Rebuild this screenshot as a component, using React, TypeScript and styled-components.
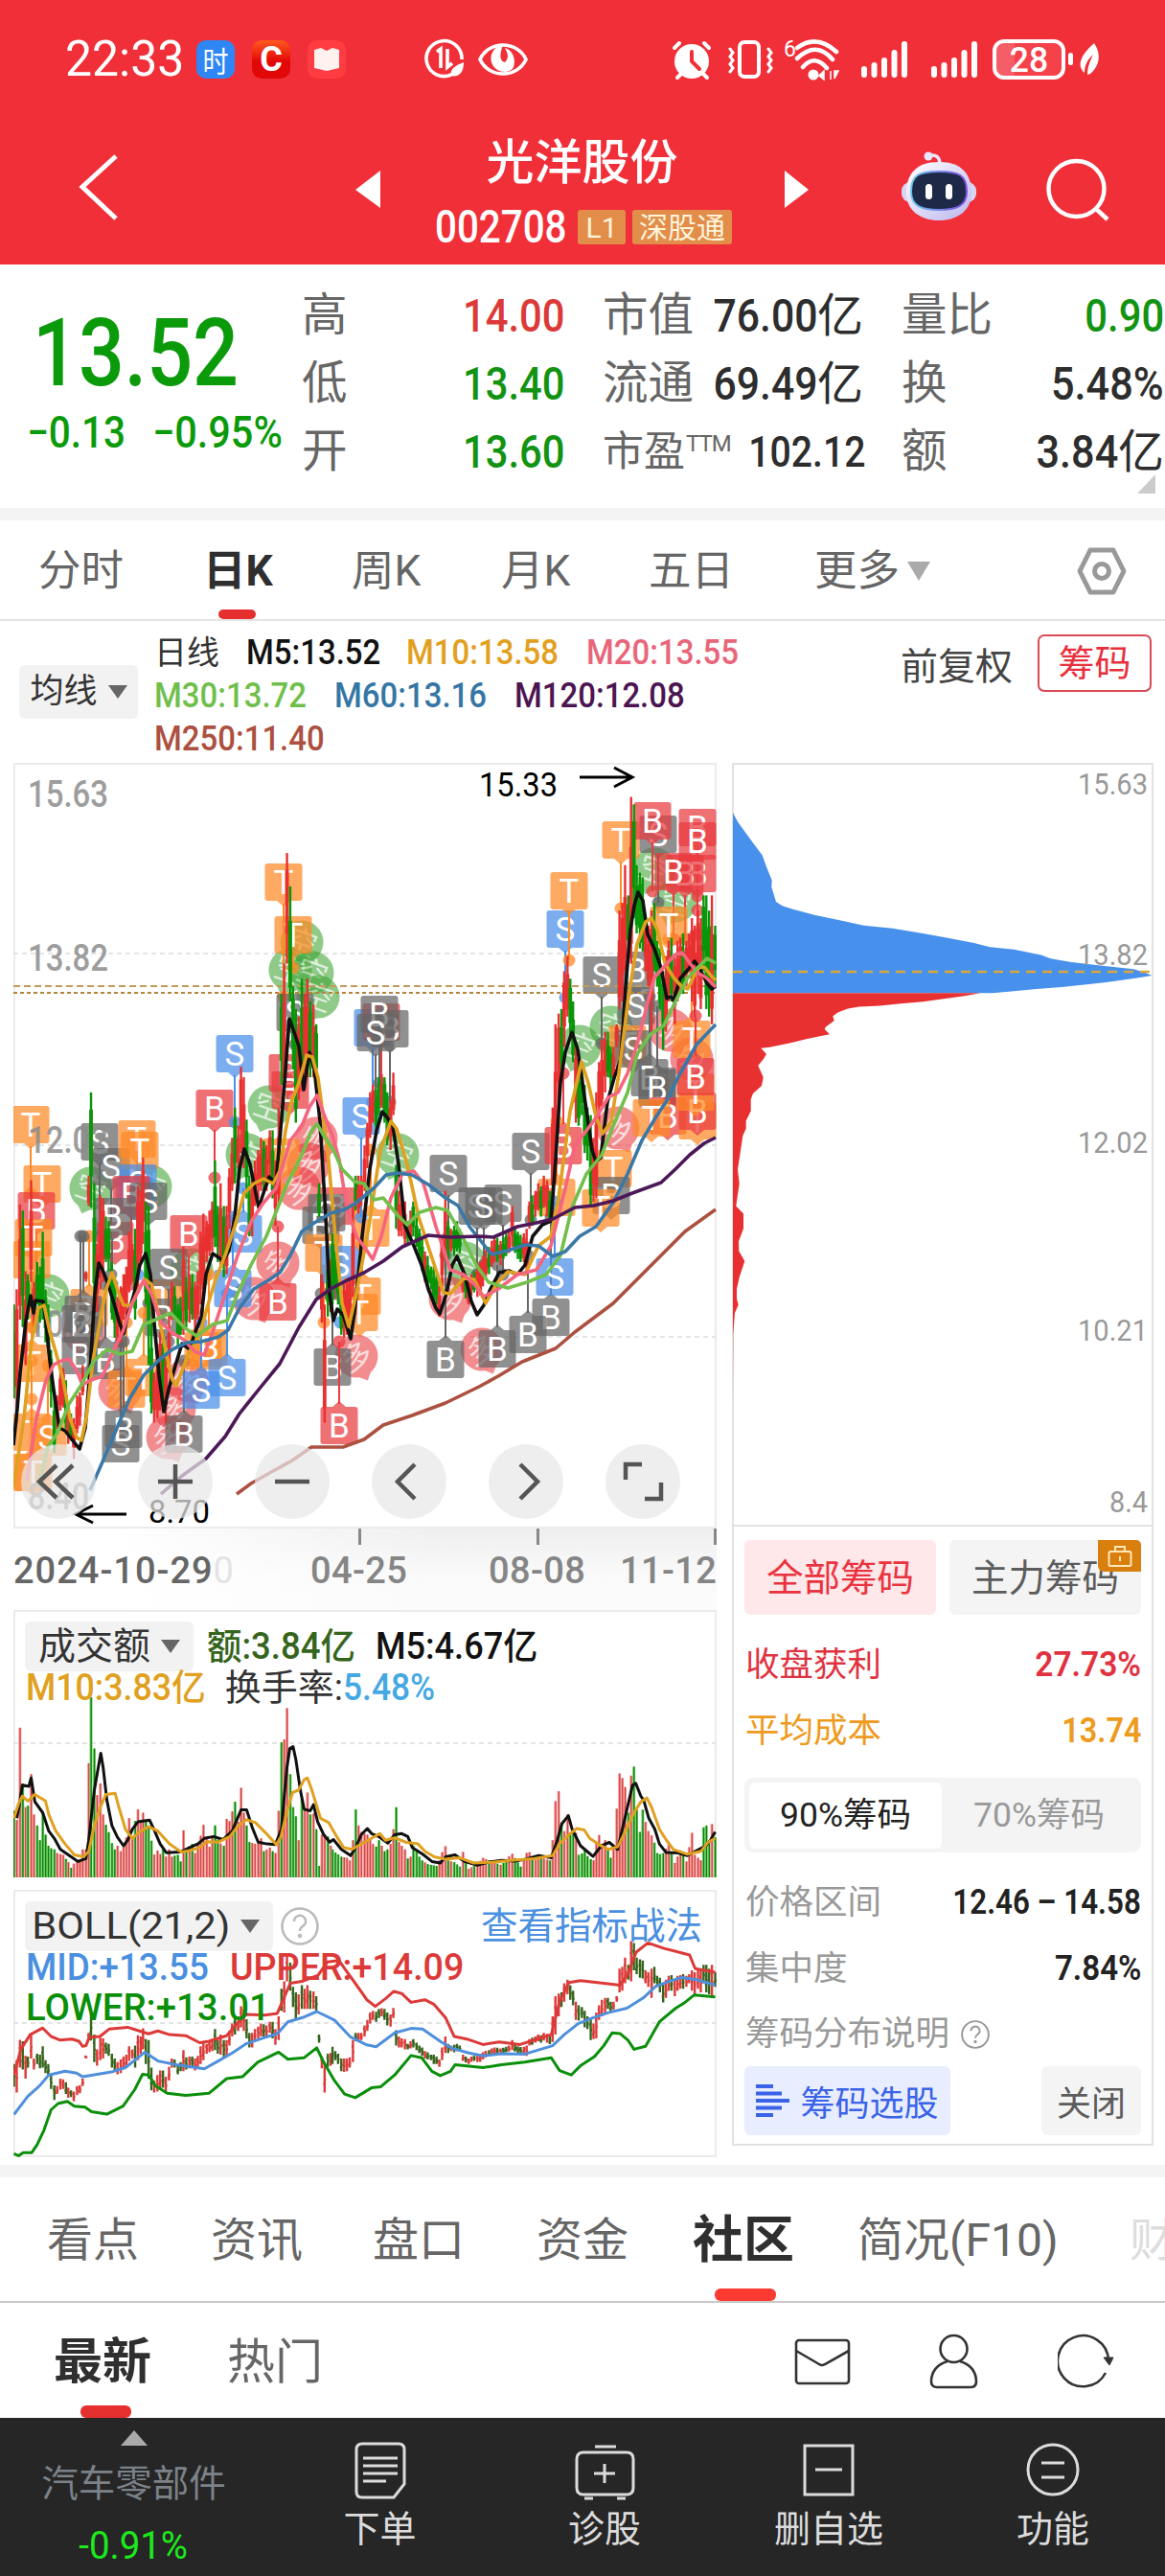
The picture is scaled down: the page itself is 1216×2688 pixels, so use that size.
// Imports
import {FC, ReactNode} from "react";
import styled, {createGlobalStyle} from "styled-components";

const GlobalStyle = createGlobalStyle`
	* { box-sizing: border-box; }
	body {
		margin: 0;
		background: #fff;
		color: #333;
		font-family: Roboto, "Noto Sans CJK SC", sans-serif;
		-webkit-font-smoothing: antialiased;
	}
	svg { display: block; flex: none; }
`;

// Chart data
type Point = [number, number];

const parse = (data: string, map: (x: number, y: number) => Point): Point[] => {
	const n = data.trim().split(/\s+/).map(Number);
	const out: Point[] = [];
	for (let i = 0; i < n.length; i += 2) out.push(map(n[i], n[i + 1]));
	return out;
};
const join = (points: Point[]) =>
	points.map(([x, y]) => `${x.toFixed(1)},${y.toFixed(1)}`).join(" ");

// The lower panels and the candles share one scale
const px = (x: number) => x / 2.063;
const low = (x: number, y: number): Point => [px(x), 1660 + y / 2.613];
const same = (x: number, y: number): Point => [x, y];
const candleY = (y: number) => 830 + (y - 954) * 1.581;

// x, high, low, direction
const candles = `30 1290 1352 g;36 1280 1368 r;43 1224 1300 r;49 1228 1305 g;55 1268 1330 r;60 1270 1300 g;67 1208 1275 r;73 1275 1305 r;80 1262 1290 g;86 1265 1302 g;92 1242 1300 g;98 1280 1315 g;104 1290 1322 g;110 1320 1358 g;117 1348 1388 g;123 1350 1372 r;130 1330 1360 r;136 1332 1358 r;142 1340 1372 g;147 1355 1382 r;153 1362 1380 g;159 1365 1392 r;166 1350 1375 r;172 1348 1370 r;178 1330 1350 r;185 1268 1275 r;191 1205 1225 r;196 1150 1226 g;203 1210 1285 g;209 1250 1295 r;216 1218 1280 r;222 1220 1275 r;228 1232 1262 g;234 1235 1268 g;241 1262 1300 g;247 1275 1312 g;253 1285 1318 r;260 1278 1315 r;266 1270 1300 r;272 1265 1300 r;278 1242 1282 r;285 1250 1275 r;291 1240 1300 g;297 1212 1280 r;303 1215 1262 r;308 1193 1250 r;314 1222 1290 g;320 1225 1330 g;326 1300 1362 g;332 1335 1368 r;339 1320 1365 r;345 1308 1360 r;351 1308 1355 g;357 1325 1368 r;364 1298 1335 r;370 1275 1300 r;376 1278 1300 g;383 1290 1318 g;389 1285 1310 g;395 1252 1310 r;401 1272 1305 g;408 1270 1302 r;414 1270 1300 g;420 1275 1308 r;426 1268 1300 r;432 1242 1290 r;438 1230 1280 r;445 1235 1262 r;451 1228 1258 r;457 1222 1255 r;463 1195 1252 g;469 1225 1262 g;475 1210 1265 r;482 1225 1272 g;488 1225 1270 r;494 1200 1240 r;500 1180 1215 r;506 1160 1210 g;513 1172 1200 r;519 1133 1190 r;525 1140 1200 r;531 1168 1220 g;537 1205 1245 g;543 1205 1245 r;549 1195 1225 r;556 1188 1220 r;562 1180 1215 r;568 1182 1215 g;574 1185 1215 r;581 1175 1205 r;587 1175 1220 g;593 1195 1238 r;600 1160 1225 r;606 1085 1145 g;612 1065 1150 r;618 992 1065 r;625 1014 1090 g;631 1080 1135 g;637 1095 1170 g;643 1100 1155 r;650 1075 1140 g;656 1085 1140 r;662 1075 1140 r;668 1090 1140 g;675 1092 1140 r;681 1105 1145 g;687 1210 1232 g;693 1270 1302 r;699 1290 1368 r;706 1262 1298 g;712 1260 1295 r;716 1243 1290 g;722 1255 1280 g;728 1262 1290 g;735 1275 1310 g;741 1275 1312 r;747 1275 1310 r;753 1272 1300 r;760 1225 1285 r;766 1205 1228 g;772 1205 1230 r;778 1205 1225 r;785 1185 1215 r;791 1170 1200 r;797 1150 1180 r;803 1145 1170 r;810 1148 1175 g;816 1140 1165 g;822 1138 1160 r;828 1140 1170 g;834 1150 1185 g;841 1155 1188 r;847 1137 1165 r;853 1198 1240 g;859 1215 1245 r;865 1220 1245 r;872 1222 1250 r;878 1235 1250 g;884 1228 1248 r;890 1222 1245 g;897 1232 1252 g;903 1240 1260 g;909 1245 1268 g;915 1255 1275 r;921 1258 1278 g;928 1265 1280 g;934 1265 1290 g;940 1270 1290 g;946 1278 1298 r;952 1245 1280 r;959 1215 1260 r;965 1235 1260 g;971 1240 1255 r;978 1238 1258 g;984 1235 1255 g;990 1240 1256 g;997 1265 1282 r;1003 1270 1286 g;1009 1275 1290 r;1015 1270 1284 r;1021 1268 1282 g;1028 1265 1285 r;1034 1262 1284 r;1040 1258 1278 r;1046 1254 1272 r;1053 1252 1270 g;1059 1248 1265 r;1065 1245 1262 r;1071 1246 1262 g;1078 1248 1264 r;1084 1246 1260 g;1090 1243 1258 g;1096 1240 1256 r;1103 1225 1252 r;1109 1238 1256 g;1115 1242 1260 g;1121 1244 1262 g;1128 1243 1262 r;1134 1240 1268 r;1140 1222 1240 r;1146 1218 1238 g;1153 1215 1232 r;1159 1210 1228 r;1165 1212 1232 g;1171 1205 1226 r;1178 1208 1232 r;1184 1215 1236 g;1190 1160 1230 r;1196 1105 1210 r;1203 1098 1160 r;1209 1095 1135 g;1215 1070 1120 r;1222 1060 1100 r;1228 1075 1115 g;1234 1090 1130 g;1240 1120 1170 r;1246 1130 1172 g;1253 1135 1165 g;1259 1145 1190 g;1265 1160 1195 g;1272 1165 1225 g;1278 1180 1222 r;1284 1150 1220 r;1290 1130 1170 r;1296 1115 1160 r;1303 1110 1150 r;1309 1110 1140 g;1315 1120 1148 g;1321 1120 1142 r;1328 1105 1120 r;1334 1030 1095 r;1340 1025 1090 r;1346 1000 1070 r;1353 1020 1060 g;1359 955 1065 r;1365 960 1035 g;1371 1000 1045 g;1378 1005 1055 g;1384 1008 1057 g;1390 1035 1070 r;1396 1040 1080 r;1403 1030 1110 r;1409 1025 1070 g;1415 1050 1080 g;1421 1055 1095 g;1428 1070 1122 g;1434 1060 1110 r;1440 1050 1090 r;1446 1048 1090 g;1453 1060 1105 r;1459 1050 1090 r;1465 1048 1085 r;1471 1045 1085 g;1478 1050 1080 r;1484 1045 1070 r;1490 1035 1090 r;1496 1040 1100 r;1503 1030 1085 r;1509 1035 1095 r;1515 1020 1070 g;1521 1020 1095 g;1527 1030 1100 g;1533 1020 1105 r;1540 1040 1080 g`
	.split(";")
	.map((row) => {
		const [x, hi, lo, dir] = row.trim().split(" ");
		return {x: Number(x), hi: Number(hi), lo: Number(lo), up: dir === "r"};
	});

const averages: {color: string; data: string}[] = [
	{
		color: "#111",
		data: "14 1508 18 1470 21 1433 27 1378 32 1352 35 1370 37 1357 45 1358 48 1380 52 1420 56 1450 62 1490 68 1493 75 1502 83 1512 89 1490 94 1430 99 1350 103 1318 107 1325 112 1338 119 1360 124 1378 129 1392 134 1370 140 1350 146 1320 152 1308 157 1330 160 1370 166 1435 171 1473 176 1450 183 1425 190 1402 198 1408 203 1392 210 1375 215 1330 222 1308 228 1312 233 1316 239 1305 245 1270 250 1220 255 1199 261 1215 266 1240 270 1260 275 1245 281 1228 288 1235 292 1190 297 1130 302 1063 308 1080 312 1092 317 1137 323 1098 328 1115 334 1170 340 1270 344 1350 348 1378 352 1366 358 1372 363 1387 366 1397 370 1370 378 1290 386 1220 393 1180 399 1160 404 1166 410 1175 416 1215 423 1280 432 1300 440 1320 447 1345 455 1365 459 1371 466 1350 472 1320 477 1311 485 1330 492 1358 498 1372 505 1362 512 1345 521 1328 531 1326 540 1330 548 1320 556 1290 566 1278 575 1274 580 1210 585 1130 590 1098 597 1077 603 1095 608 1130 613 1165 618 1200 622 1212 627 1208 634 1150 641 1125 648 1105 653 1030 658 970 662 945 666 931 671 940 676 975 683 990 690 1010 696 1042 700 1040 703 1044 710 1021 718 1012 725 1003 730 1010 738 1026 743 1032 747 1029",
	},
	{
		color: "#e0a020",
		data: "14 1552 25 1480 33 1400 40 1365 46 1362 52 1390 58 1410 66 1440 73 1480 80 1500 85 1503 90 1480 97 1420 104 1380 111 1345 117 1328 124 1350 129 1362 137 1362 145 1345 151 1335 158 1340 165 1370 172 1405 180 1440 184 1446 190 1430 198 1410 208 1395 216 1365 225 1335 235 1310 245 1280 255 1245 265 1235 275 1230 285 1235 292 1222 298 1180 304 1150 312 1130 320 1101 326 1103 332 1125 342 1200 350 1290 357 1360 364 1384 372 1350 385 1280 397 1200 408 1170 414 1178 425 1215 437 1270 450 1310 463 1349 470 1350 484 1334 495 1335 507 1360 518 1340 530 1327 548 1330 562 1300 575 1290 583 1250 595 1160 607 1108 614 1130 622 1165 629 1183 638 1170 646 1120 656 1040 665 985 674 962 680 958 686 970 694 1005 703 1020 712 1030 718 1032 726 1015 731 1008 736 1010 742 1018 747 1023",
	},
	{
		color: "#f5657e",
		data: "28 1545 38 1480 48 1440 56 1424 64 1420 72 1418 80 1430 86 1445 95 1440 107 1436 118 1410 128 1390 138 1360 150 1336 158 1350 168 1380 180 1391 192 1398 203 1410 213 1414 222 1390 235 1350 248 1310 262 1275 275 1255 288 1240 303 1190 315 1175 323 1155 331 1143 337 1160 347 1185 354 1210 362 1260 372 1290 383 1305 389 1314 398 1290 408 1250 420 1225 432 1222 442 1235 455 1280 470 1325 484 1330 495 1340 505 1353 520 1345 540 1330 560 1325 575 1300 590 1240 600 1195 612 1180 623 1165 635 1145 645 1140 655 1120 665 1090 675 1050 683 1020 692 1010 705 996 712 994 720 1005 728 1015 737 1020 747 1030",
	},
	{
		color: "#72bf4b",
		data: "40 1550 50 1510 60 1495 72 1465 85 1445 98 1420 112 1408 125 1413 138 1410 150 1382 165 1376 178 1370 192 1385 205 1394 222 1382 237 1378 248 1350 262 1320 278 1290 290 1260 300 1235 315 1205 325 1180 331 1173 338 1185 348 1200 357 1220 370 1233 380 1235 390 1252 400 1250 415 1268 425 1278 438 1265 455 1260 467 1263 480 1285 497 1320 510 1338 530 1344 550 1338 570 1330 585 1310 597 1260 612 1225 628 1205 642 1170 655 1140 665 1100 678 1080 693 1070 705 1045 718 1020 730 1008 738 1000 747 1005",
	},
	{
		color: "#3a78a8",
		data: "94 1555 105 1530 120 1495 135 1460 150 1435 165 1420 180 1408 195 1401 210 1400 228 1395 238 1388 250 1365 265 1345 280 1336 292 1328 303 1310 315 1285 328 1276 345 1266 360 1262 372 1255 390 1240 403 1226 415 1224 430 1226 447 1236 465 1250 478 1258 490 1280 513 1309 530 1305 548 1299 562 1300 577 1311 590 1306 605 1290 622 1280 640 1255 655 1225 670 1190 685 1165 695 1150 710 1120 727 1090 747 1069",
	},
	{
		color: "#4c1858",
		data: "168 1559 190 1540 215 1522 235 1499 250 1475 270 1450 292 1423 312 1385 330 1356 345 1345 362 1336 380 1328 400 1316 420 1301 447 1289 470 1291 500 1290 515 1291 540 1280 560 1276 577 1272 600 1260 620 1258 640 1253 660 1245 690 1234 705 1220 720 1205 735 1193 747 1187",
	},
	{
		color: "#ac5040",
		data: "247 1559 262 1548 285 1535 305 1524 325 1510 358 1510 380 1502 400 1487 430 1477 465 1464 500 1447 520 1436 545 1421 580 1407 600 1390 640 1360 680 1320 715 1285 747 1262",
	},
];

const volumeTops = parse(
	"30 600 36 625 42 345 48 515 55 590 61 585 67 500 73 610 80 640 86 680 92 605 98 665 105 700 117 705 123 715 136 720 147 740 153 755 160 742 172 738 178 705 184 745 191 470 196 290 203 430 209 557 216 525 222 610 228 638 234 658 240 685 247 705 253 695 260 710 270 690 278 620 284 680 296 590 303 630 308 605 315 630 322 655 327 688 333 725 339 708 345 718 351 705 358 728 364 705 370 725 376 722 383 720 389 738 395 653 401 705 414 690 420 715 426 690 432 668 438 638 451 698 463 640 470 685 482 695 488 622 494 628 506 575 513 630 519 537 525 605 531 640 537 685 550 690 562 675 568 710 581 700 587 710 593 715 600 600 606 413 612 405 618 320 625 500 631 590 637 615 643 680 649 560 655 605 662 550 668 610 674 600 681 650 687 750 693 665 700 665 706 670 712 695 718 710 724 715 735 725 747 728 753 735 760 680 766 596 772 640 779 660 791 665 803 690 809 700 816 680 828 710 834 705 841 690 847 650 853 590 859 685 865 695 872 705 878 730 884 725 890 695 903 725 909 735 920 745 940 750 946 735 958 690 965 735 978 740 990 752 997 712 1009 758 1028 745 1040 728 1053 735 1080 748 1102 715 1121 752 1137 706 1150 735 1165 728 1184 735 1190 680 1200 503 1206 590 1212 675 1222 610 1228 660 1240 660 1247 730 1260 700 1266 728 1278 735 1284 690 1292 658 1298 710 1303 680 1315 728 1322 690 1334 498 1342 515 1347 540 1353 605 1360 487 1366 478 1372 620 1380 670 1386 560 1392 665 1398 650 1410 690 1416 720 1428 715 1441 690 1453 742 1466 705 1478 738 1490 660 1496 720 1509 735 1515 645 1521 640 1527 690 1534 627 1541 680",
	same
);
const volumeAt = (x: number) => {
	const i = Math.max(1, volumeTops.findIndex(([vx]) => vx >= x));
	const [x0, y0] = volumeTops[i - 1];
	const [x1, y1] = volumeTops[i];
	return y0 + ((y1 - y0) * (x - x0)) / (x1 - x0);
};
const volumeM5 =
	"36 620 42 580 48 530 62 533 67 510 75 575 92 605 105 655 117 675 130 705 153 725 168 738 185 730 191 680 203 545 209 500 217 443 222 480 230 570 241 640 253 672 266 695 275 680 285 650 297 630 322 625 333 655 345 690 358 714 389 712 408 700 426 690 440 675 460 670 480 678 500 655 510 625 519 597 531 597 543 645 556 685 575 690 593 692 606 650 612 560 618 480 624 430 631 425 637 460 647 545 655 595 668 600 675 583 684 630 697 665 710 685 718 678 735 705 755 722 766 700 778 665 791 648 800 662 815 670 835 688 850 665 865 662 878 670 888 700 910 718 930 738 948 742 960 725 980 720 1000 738 1028 748 1050 740 1080 735 1110 737 1130 732 1160 722 1187 728 1200 680 1210 635 1224 613 1232 650 1250 695 1277 724 1295 695 1312 686 1330 705 1340 650 1353 580 1362 530 1369 525 1380 560 1386 570 1397 620 1410 650 1420 690 1434 713 1460 715 1480 722 1500 708 1520 695 1530 680 1540 657";
const volumeM10 =
	"30 620 40 580 48 560 60 573 75 555 98 573 105 610 120 655 140 690 160 720 180 725 191 710 203 640 216 590 228 555 248 552 256 590 270 650 285 675 300 658 320 643 340 655 365 690 390 712 410 708 430 700 445 684 470 685 495 670 510 645 530 624 550 632 572 660 595 692 605 670 618 600 630 550 643 543 655 515 662 510 672 545 690 620 708 632 725 670 740 700 758 705 778 690 800 675 818 662 830 680 850 673 875 686 900 690 915 710 935 725 960 732 990 728 1020 742 1060 740 1100 735 1150 730 1190 722 1205 690 1225 665 1242 648 1258 652 1270 675 1290 692 1310 705 1330 698 1345 660 1365 605 1380 575 1393 565 1403 590 1420 650 1435 680 1450 705 1480 718 1510 710 1525 685 1540 675";

const bands: {color: string; data: string}[] = [
	{
		color: "#dc3a38",
		data: "30 1320 45 1250 65 1210 92 1192 110 1215 130 1225 155 1222 170 1228 178 1242 185 1240 192 1218 215 1215 235 1195 275 1190 300 1200 320 1208 340 1200 365 1210 400 1213 430 1232 450 1228 488 1213 510 1180 530 1155 570 1157 597 1152 608 1120 625 1070 650 1065 685 1048 705 1012 730 1008 742 1030 765 1070 790 1115 808 1133 830 1112 848 1092 865 1098 885 1122 915 1115 935 1128 960 1165 978 1215 1005 1222 1040 1237 1075 1230 1120 1237 1150 1225 1187 1210 1205 1120 1225 1068 1250 1063 1300 1070 1335 1075 1350 1050 1370 985 1395 960 1430 975 1485 993 1497 1030 1540 1040",
	},
	{
		color: "#4f8fdc",
		data: "30 1428 60 1378 85 1350 105 1320 140 1310 165 1315 178 1325 200 1320 240 1312 270 1300 312 1258 340 1282 380 1292 440 1303 470 1282 500 1260 530 1235 570 1218 597 1208 620 1175 655 1162 682 1147 720 1170 755 1217 790 1238 810 1243 850 1205 885 1193 910 1195 950 1230 975 1248 1010 1260 1040 1268 1080 1262 1130 1263 1190 1240 1215 1210 1245 1180 1275 1165 1310 1150 1350 1138 1385 1110 1412 1078 1440 1065 1468 1054 1500 1060 1540 1075",
	},
	{
		color: "#0a8f0a",
		data: "30 1535 40 1540 50 1532 68 1532 80 1510 95 1470 110 1415 125 1398 145 1392 160 1405 183 1408 197 1420 230 1427 265 1405 290 1360 307 1318 320 1320 335 1350 360 1370 400 1376 450 1370 488 1330 522 1325 555 1285 600 1258 620 1277 655 1273 682 1246 695 1280 720 1335 742 1372 765 1382 800 1355 820 1352 850 1320 885 1267 908 1273 930 1310 948 1322 970 1310 980 1292 1040 1300 1080 1292 1130 1285 1187 1273 1205 1308 1230 1320 1250 1295 1280 1270 1300 1240 1318 1205 1335 1207 1352 1225 1365 1250 1390 1242 1420 1175 1455 1138 1475 1122 1495 1102 1540 1107",
	},
];

const chip = (x: number, y: number): Point => [750 + x / 3, 780 + y / 1.912];
const lossChips =
	"45 130 60 148 85 170 110 192 137 215 150 238 167 265 166 278 180 308 200 316 230 322 300 334 390 346 455 355 545 361 640 371 710 379 800 390 850 398 925 403 1010 414 1040 421 1100 428 1195 435 1300 442 1340 450 1357 455 1310 460 1220 468 1160 472 1075 478 995 482 925 486 858 490 45 490";
const profitChips =
	"45 490 820 490 765 496 700 502 640 507 570 511 505 515 440 517 405 521 375 528 358 536 362 545 335 558 332 562 348 572 310 577 278 581 222 590 160 598 133 600 150 612 140 622 124 635 140 658 135 675 108 690 101 702 101 725 86 745 86 760 76 775 70 800 60 842 65 870 55 915 78 930 78 960 63 985 64 1005 82 1025 66 1055 57 1080 57 1100 62 1112 51 1128 46 1170 45 1310";

// Signal flags: letter, centre x, top y, colour key, end of the stem (0 = none)
const tones: Record<string, string> = {
	o: "#ff8a26",
	r: "#e93b40",
	b: "#4a90ea",
	k: "#666",
};
const flags = `T 32 1154 o 1246;T 44 1216 o 0;B 38 1244 r 1345;T 35 1272 o 1385;T 33 1295 o 1385;S 104 1172 k 1290;S 116 1198 k 1330;T 143 1169 o 1240;T 146 1181 o 1250;S 144 1215 b 1330;S 140 1228 b 0;B 137 1227 r 1340;S 155 1234 k 1360;B 120 1275 r 0;B 117 1250 k 1340;B 197 1268 r 1350;T 170 1335 o 0;S 176 1303 k 1400;B 170 1355 k 0;B 224 1137 r 1229;S 254 1268 b 1240;S 243 1325 b 1270;B 290 1339 r 1280;T 93 1345 o 1290;B 87 1352 k 1290;B 84 1362 k 1290;B 84 1395 k 1380;B 110 1400 k 1340;T 33 1403 o 1370;T 33 1475 o 1420;S 50 1480 o 1425;T 33 1517 o 1460;T 35 1517 o 0;T 132 1430 o 1380;T 150 1418 o 1370;S 126 1487 k 1400;B 129 1472 k 1400;B 192 1477 k 1420;T 212 1390 o 1330;B 218 1387 o 1330;S 237 1418 b 1350;S 210 1431 b 1380;B 351 1239 r 1350;S 341 1246 k 1350;B 335 1259 k 1350;T 338 1288 o 1380;S 355 1300 b 1380;T 387 1262 o 1200;T 378 1333 o 1300;T 375 1350 o 0;B 347 1407 k 1350;B 354 1468 r 1400;S 377 1145 b 1270;B 300 1100 r 0;B 303 1118 r 0;T 293 1188 o 1240;T 306 956 o 1010;T 296 901 o 1040;S 308 1037 k 1090;S 245 1080 b 1171;S 389 1053 b 1150;B 398 1047 r 1150;B 407 1054 k 1150;B 396 1039 k 1130;S 392 1058 k 1150;S 590 950 b 1041;T 594 910 o 1002;S 628 998 k 1089;S 554 1182 k 1273;S 468 1205 k 1290;S 498 1239 k 1330;S 525 1236 k 1330;S 505 1239 k 1320;T 648 857 o 948;S 687 851 k 942;B 681 837 r 930;B 728 844 r 935;B 728 858 r 975;B 728 892 r 950;B 715 892 r 980;B 703 890 r 980;T 698 946 o 980;B 664 993 k 0;S 664 1030 k 0;T 655 1070 o 0;S 661 1075 k 0;T 686 1114 k 0;B 678 1105 k 1040;B 686 1116 k 1050;B 697 1145 r 0;T 680 1147 o 0;T 722 1065 o 1010;T 728 1150 o 0;B 728 1140 r 0;T 726 1120 o 0;B 726 1104 r 1060;B 588 1176 r 1120;T 581 1230 o 1170;T 640 1200 o 0;B 638 1228 k 0;T 627 1241 o 0;B 575 1355 k 1270;S 579 1313 b 1254;B 551 1373 k 1310;B 519 1388 k 1320;B 465 1399 k 1310`
	.split(";")
	.map((row) => {
		const [letter, x, y, tone, end] = row.trim().split(" ");
		return {letter, x: Number(x), y: Number(y), tone: tones[tone], end: Number(end)};
	});
const shorts = "315 983 303 1012 326 1015 332 1040 281 1155 258 1205 95 1240 157 1238 50 1352 200 1325 638 1072 605 1092 485 1318 415 1205 683 907 705 940";
const longs = "330 1188 322 1215 312 1240 290 1318 265 1355 470 1355 503 1408 372 1415 645 1177 125 1450 182 1470 195 1440 175 1500 88 1390 700 1075 722 1105";

// Styled parts
const Page = styled.main`
	width: 1216px;
	height: 2688px;
	overflow: hidden;
	display: flex;
	flex-direction: column;
`;

const Squeeze = styled.span<{$k?: number; $from?: string}>`
	display: inline-block;
	white-space: nowrap;
	transform: scaleX(${(p) => p.$k ?? 0.84});
	transform-origin: ${(p) => p.$from ?? "left"} center;
`;

const Header = styled.header`
	height: 276px;
	flex: none;
	background: #f12f38;
	color: #fff;
`;

const StatusBar = styled.div`
	height: 124px;
	display: flex;
	align-items: center;
	padding-left: 68px;
	font-size: 52px;
`;

const Clock = styled.div`
	width: 137px;
	line-height: 124px;
`;

const AppIcon = styled.div<{$bg: string}>`
	width: 40px;
	height: 40px;
	margin-right: 18px;
	border-radius: 10px;
	background: ${(p) => p.$bg};
	display: flex;
	align-items: center;
	justify-content: center;
	overflow: hidden;
	font-size: 36px;
	font-weight: 700;
`;

const Battery = styled.div`
	width: 76px;
	height: 42px;
	margin-left: 15px;
	border: 4px solid #fff;
	border-radius: 12px;
	background: linear-gradient(90deg, #f55e66 0 28%, #f4414a 28%);
	text-align: center;
	font-size: 37px;
	font-weight: 500;
	line-height: 35px;
`;

const TitleBar = styled.div`
	height: 152px;
	display: flex;
`;

const TitleSlot = styled.div<{$w: number; $top: number; $left?: number}>`
	width: ${(p) => p.$w}px;
	padding-top: ${(p) => p.$top}px;
	padding-left: ${(p) => p.$left ?? 0}px;
`;

const StockTitle = styled.div`
	width: 423px;
	text-align: center;
	font-size: 50px;
	font-weight: 500;
	line-height: 60px;
	padding-top: 16px;
`;

const StockCode = styled.div`
	display: flex;
	align-items: center;
	height: 74px;
	padding-left: 58px;
	font-size: 48px;
	line-height: 48px;
	font-weight: 500;
	gap: 7px;
`;

const CodeBox = styled.span`
	width: 142px;
	text-align: left;
`;

const Badge = styled.span<{$w: number}>`
	width: ${(p) => p.$w}px;
	height: 36px;
	border-radius: 3px;
	background: #e28d49;
	color: #fff4dc;
	font-size: 30px;
	line-height: 37px;
	font-weight: 400;
	text-align: center;
`;

const Quote = styled.section`
	height: 254px;
	flex: none;
	display: grid;
	grid-template-columns: 315px 314px 312px 275px;
	position: relative;
`;

const PriceBox = styled.div`
	color: #0a9a0a;
	padding: 34px 0 0 28px;
`;

const Price = styled.div`
	padding-left: 6px;
	font-size: 98px;
	line-height: 118px;
	font-weight: 500;
`;

const Change = styled.div`
	display: flex;
	font-size: 46px;
	line-height: 46px;
	font-weight: 500;
	span + span { margin-left: 14px; }
`;

const Stats = styled.div<{$inset: number}>`
	padding: 18px ${(p) => p.$inset}px 0 0;
`;

const Stat = styled.div<{$color?: string}>`
	display: flex;
	justify-content: space-between;
	height: 71px;
	line-height: 71px;
	font-size: 48px;
	font-weight: 500;
	color: ${(p) => p.$color ?? "#2d2d2d"};
	white-space: nowrap;
	em {
		font-style: normal;
		font-weight: 400;
		color: #666;
		font-size: 47.5px;
	}
	em small { font-size: 24px; vertical-align: 15px; margin-left: 1px; letter-spacing: -1px; line-height: 1; }
	b { font-weight: 400; font-size: 48px; }
`;

const Corner = styled.i`
	position: absolute;
	right: 10px;
	bottom: 15px;
	border-left: 19px solid transparent;
	border-bottom: 20px solid #ccc;
`;

const Strip = styled.div`
	height: 13px;
	flex: none;
	background: #f4f4f4;
`;

const PeriodTabs = styled.nav`
	height: 105px;
	flex: none;
	padding: 2px 0 0 40px;
	display: grid;
	grid-template-columns: 172px 155px 156px 154px 173px 274px 60px;
	border-bottom: 2px solid #e4e4e4;
	font-size: 44.5px;
	color: #666;
`;

const Tab = styled.div<{$on?: boolean}>`
	display: flex;
	align-items: center;
	gap: 8px;
	line-height: 60px;
	position: relative;
	${(p) => p.$on && "color: #2f2f2f; font-weight: 700;"}
`;

const Marker = styled.i<{$x: number; $w: number; $h: number; $color?: string}>`
	position: absolute;
	left: ${(p) => p.$x}px;
	bottom: 0;
	width: ${(p) => p.$w}px;
	height: ${(p) => p.$h}px;
	border-radius: 6px;
	background: ${(p) => p.$color ?? "#e63030"};
`;

const Caret = styled.i<{$s: number; $h: number; $color: string; $up?: boolean}>`
	width: 0;
	border: ${(p) => p.$s}px solid transparent;
	${(p) => (p.$up ? "border-top: 0; border-bottom" : "border-bottom: 0; border-top")}: ${(p) => p.$h}px solid ${(p) => p.$color};
`;

const Legend = styled.section`
	height: 148px;
	flex: none;
	display: flex;
	padding-left: 20px;
`;

const Picker = styled.div<{$w: number; $h?: number}>`
	width: ${(p) => p.$w}px;
	height: ${(p) => p.$h ?? 52}px;
	flex: none;
	display: flex;
	align-items: center;
	justify-content: center;
	gap: 11px;
	background: #f2f2f2;
	border-radius: 6px;
	color: #333;
	font-size: 39px;
	line-height: 50px;
	white-space: nowrap;
`;

const LegendPicker = styled.div`
	padding-top: 46px;
	width: 141px;
`;

const Lines = styled.div`
	width: 779px;
	padding-top: 11px;
`;

const Line = styled.div`
	height: 45px;
	line-height: 45px;
	font-size: 36px;
	font-weight: 500;
	display: flex;
	gap: 14px;
	white-space: nowrap;
`;

const Ink = styled.span<{$c: string; $gap?: number}>`
	color: ${(p) => p.$c};
	margin-right: ${(p) => p.$gap ?? 0}px;
`;

const Adjust = styled.div`
	width: 143px;
	padding-top: 18px;
	font-size: 39px;
	line-height: 60px;
	color: #444;
`;

const ChipsButton = styled.div`
	width: 119px;
	height: 60px;
	margin-top: 14px;
	border: 2px solid #d94a55;
	border-radius: 7px;
	color: #e8303c;
	font-size: 38px;
	line-height: 57px;
	text-align: center;
`;

const Board = styled.section`
	height: 1463px;
	flex: none;
	display: grid;
	grid-template-columns: 734px 440px;
	column-gap: 16px;
	padding-left: 14px;
	align-items: start;
`;

const KChart = styled.div`
	height: 799px;
	position: relative;
	border: 2px solid #ebebeb;
	svg.plot { margin: -2px; }
`;

const Controls = styled.div`
	position: absolute;
	left: 6px;
	bottom: 8px;
	display: flex;
	gap: 44px;
`;

const RoundButton = styled.button`
	width: 78px;
	height: 78px;
	padding: 0;
	border: 0;
	border-radius: 50%;
	background: rgba(232, 232, 232, 0.72);
	display: flex;
	align-items: center;
	justify-content: center;
`;

const TimeAxis = styled.div`
	height: 85px;
	display: grid;
	grid-template-columns: 310px 186px 137px 101px;
	background: linear-gradient(90deg, #fff 15%, rgba(255, 255, 255, 0) 60%), linear-gradient(#efefef, #fafafa 60%, #fbfbfb);
	color: #858585;
	font-size: 38px;
	line-height: 88px;
	font-weight: 500;
	span:first-child { color: #666; letter-spacing: 1px; }
	u { text-decoration: none; color: #e4e4e4; font-weight: 400; }
`;

const Tick = styled.span<{$x: number}>`
	background: linear-gradient(#888, #888) ${(p) => p.$x}px 0 / 3px 17px no-repeat;
	white-space: nowrap;
	letter-spacing: 0.4px;
`;

const SubChart = styled.div<{$gap?: number}>`
	height: 279px;
	margin-bottom: ${(p) => p.$gap ?? 0}px;
	border: 2px solid #ebebeb;
	position: relative;
`;

const Plot = styled.svg`
	position: absolute;
	left: -2px;
	top: -2px;
`;

const SubHead = styled.div`
	position: relative;
	display: flex;
	align-items: center;
	padding: 10px 12px 0 10px;
	margin-bottom: -4px;
	font-size: 38px;
	line-height: 52px;
	white-space: nowrap;
`;

const SubLine = styled.div`
	position: relative;
	display: flex;
	height: 42px;
	padding-left: 11px;
	font-size: 38px;
	line-height: 42px;
	white-space: nowrap;
	gap: 16px;
`;

const Figure = styled(Squeeze)`
	font-weight: 500;
`;

const Link = styled.a`
	margin-left: auto;
	margin-right: 1px;
	font-size: 38.5px;
	color: #4a8fe0;
`;

const ChipPanel = styled.aside`
	height: 1443px;
	border: 2px solid #e2e2e2;
`;

const ChipPlot = styled.div`
	height: 797px;
	border-bottom: 2px solid #e2e2e2;
	svg { margin: -2px; }
`;

const ChipBody = styled.div`
	padding: 14px 11px 0;
`;

const Pair = styled.div`
	display: flex;
	justify-content: space-between;
`;

const Pill = styled.div<{$on?: boolean}>`
	width: 200px;
	height: 78px;
	border-radius: 6px;
	position: relative;
	background: ${(p) => (p.$on ? "#ffe8e9" : "#f4f4f4")};
	color: ${(p) => (p.$on ? "#ea3340" : "#5c5c5c")};
	font-size: 38.5px;
	line-height: 80px;
	text-align: center;
`;

const Lock = styled.div`
	position: absolute;
	right: 0;
	top: 0;
	width: 45px;
	height: 33px;
	border-radius: 0 5px 0 6px;
	background: #d97f0e;
	display: flex;
	align-items: center;
	justify-content: center;
`;

const Row = styled.div<{$c: string; $v?: string; $top?: number}>`
	display: flex;
	justify-content: space-between;
	align-items: center;
	height: 69px;
	margin-top: ${(p) => p.$top ?? 0}px;
	padding-left: 1px;
	color: ${(p) => p.$c};
	font-size: 35.5px;
	line-height: 71px;
	b { color: ${(p) => p.$v ?? p.$c}; font-weight: 600; font-size: 36px; }
`;

const Toggle = styled.div`
	height: 78px;
	margin-top: 14px;
	padding: 5px;
	border-radius: 9px;
	background: #f4f4f4;
	display: grid;
	grid-template-columns: 191px 1fr;
	font-size: 35.5px;
	line-height: 69px;
	text-align: center;
	color: #999;
	span:first-child { margin-right: -10px; background: #fff; border-radius: 6px; color: #222; }
	span:last-child { margin-left: 10px; }
`;

const Action = styled.div<{$w: number; $bg: string; $c: string}>`
	width: ${(p) => p.$w}px;
	height: 72px;
	border-radius: 6px;
	background: ${(p) => p.$bg};
	color: ${(p) => p.$c};
	display: flex;
	align-items: center;
	justify-content: center;
	gap: 11px;
	font-size: 36px;
`;

const SectionTabs = styled.nav`
	height: 131px;
	flex: none;
	position: relative;
	display: grid;
	grid-template-columns: 171px 169px 171px 163px 172px 284px 60px;
	padding-left: 49px;
	border-bottom: 2px solid #c8c8c8;
	font-size: 48px;
	line-height: 132px;
	color: #666;
	white-space: nowrap;
	b { font-size: 53px; color: #2f2f2f; }
	span:last-of-type { color: #ddd; }
`;

const FeedTabs = styled.nav`
	height: 120px;
	flex: none;
	position: relative;
	display: grid;
	grid-template-columns: 181px 592px 141px 134px 60px;
	align-items: center;
	padding: 4px 0 0 56px;
	font-size: 50px;
	line-height: 60px;
	color: #666;
	b { font-size: 51px; color: #2f2f2f; }
`;

const Dock = styled.footer`
	height: 166px;
	flex: none;
	background: #262626;
	color: #dcdcdc;
	display: grid;
	grid-template-columns: 279px 235px 234px 234px 234px;
`;

const Sector = styled.div`
	display: flex;
	flex-direction: column;
	align-items: center;
	padding-top: 13px;
	font-size: 38.5px;
	color: #7b8288;
`;

const SectorName = styled.div`
	height: 74px;
	line-height: 80px;
`;

const SectorChange = styled.div`
	font-size: 40px;
	line-height: 62px;
	color: #1dea1d;
`;

const DockItem = styled.div`
	display: flex;
	flex-direction: column;
	align-items: center;
	padding-top: 24px;
	font-size: 38px;
	line-height: 61px;
`;

// Components
const Flag: FC<{letter: string; x: number; y: number; tone: string; end: number}> = ({
	letter,
	x,
	y,
	tone,
	end,
}) => {
	const down = end > y;
	return (
		<g>
			{end > 0 && (
				<>
					<line x1={x} x2={x} y1={down ? y + 42 : y - 3} y2={end} stroke={tone} strokeWidth={2} />
					<circle cx={x} cy={end} r={6.5} fill={tone} opacity={0.75} />
				</>
			)}
			<g opacity={0.72}>
				<rect x={x - 19.5} y={y} width={39} height={39} rx={3} fill={tone} />
				<path d={down || !end ? `M${x - 7} ${y + 39}h14l-7 6z` : `M${x - 7} ${y}h14l-7 -6z`} fill={tone} />
			</g>
			<text x={x} y={y + 32} fontSize={35} fill="#fff" textAnchor="middle">
				{letter}
			</text>
		</g>
	);
};

const Trend: FC<{points: Point[]; color: string; width?: number}> = ({points, color, width = 3}) => (
	<polyline points={join(points)} fill="none" stroke={color} strokeWidth={width} strokeLinejoin="round" />
);

const Bubble: FC<{x: number; y: number; fill: string; text: string}> = ({x, y, fill, text}) => (
	<g opacity={0.58} transform={`rotate(${fill === "#e93b40" ? -25 : 20} ${x} ${y})`}>
		<circle cx={x} cy={y} r={22.5} fill={fill} />
		<path d={`M${x - 9} ${y + 19}h18l-9 9z`} fill={fill} />
		<text x={x} y={y + 12} fontSize={32} fill="#fff" opacity={0.7} textAnchor="middle">
			{text}
		</text>
	</g>
);

const axisLabels: [string, number][] = [
	["15.63", 842],
	["13.82", 1013],
	["12.02", 1203],
	["10.21", 1395],
	["8.40", 1575],
];

const CandlePlot: FC = () => (
	<svg className="plot" width={734} height={799} viewBox="14 796 734 799">
		{[995, 1195, 1395].map((y) => (
			<line key={y} x1={14} x2={747} y1={y} y2={y} stroke="#ddd" strokeWidth={1.5} strokeDasharray="5 4" />
		))}
		{parse(shorts, same).map(([x, y]) => (
			<Bubble key={`${x}-${y}`} x={x} y={y} fill="#3fa535" text="空" />
		))}
		{parse(longs, same).map(([x, y]) => (
			<Bubble key={`${x}-${y}`} x={x} y={y} fill="#e93b40" text="多" />
		))}
		{flags.map((f, i) => (
			<Flag key={i} {...f} />
		))}
		<line x1={14} x2={747} y1={1029} y2={1029} stroke="#c39a5e" strokeWidth={2} strokeDasharray="7 4" />
		<line x1={14} x2={747} y1={1036} y2={1036} stroke="#b8843c" strokeWidth={2} strokeDasharray="4 3" />
		{axisLabels.map(([label, y]) => (
			<text
				key={label}
				x={29}
				y={y}
				fontSize={38}
				fontWeight={500}
				fill="#8c8c8c"
				opacity={0.85}
				textLength={label.length > 4 ? 84 : 64}
				lengthAdjust="spacingAndGlyphs"
			>
				{label}
			</text>
		))}
		{candles.map(({x, hi, lo, up}, i) => {
			const top = candleY(hi);
			const h = candleY(lo) - top;
			return (
				<g key={x} fill={up ? "#e83030" : "#089608"}>
					<rect x={px(x) - 1.2} y={top} width={2.4} height={h} />
					<rect x={px(x) - 1.9} y={top + h * (i % 2 ? 0.15 : 0.3)} width={3.8} height={h * 0.58} />
				</g>
			);
		})}
		{averages.map(({color, data}) => (
			<Trend key={color} color={color} points={parse(data, same)} width={3.6} />
		))}
		<g fill="#000">
			<text x={500} y={831} fontSize={35} textLength={82} lengthAdjust="spacingAndGlyphs">
				15.33
			</text>
			<text x={155} y={1589} fontSize={34} textLength={64} lengthAdjust="spacingAndGlyphs">
				8.70
			</text>
		</g>
		<path
			d="M605 811H660M641 801L660 811L641 821M132 1580H80M97 1571L79 1580L97 1589"
			fill="none"
			stroke="#000"
			strokeWidth={3}
		/>
	</svg>
);

const VolumePlot: FC = () => (
	<Plot width={734} height={279} viewBox="14 1680 734 279">
		<line x1={14} x2={747} y1={1819} y2={1819} stroke="#e4e4e4" strokeWidth={2} strokeDasharray="5 4" />
		{candles.map(({x, up}) => {
			const y = 1660 + volumeAt(x) / 2.613;
			return (
				<g key={x}>
					<rect x={px(x) - 1.5} y={y} width={3} height={1959 - y} fill={up ? "#ff9a98" : "#6fd565"} />
					<rect x={px(x) - 0.5} y={y} width={1.3} height={1959 - y} fill={up ? "#c44a48" : "#147a14"} />
				</g>
			);
		})}
		<Trend color="#111" points={parse(volumeM5, low)} />
		<Trend color="#e0a020" points={parse(volumeM10, low)} />
	</Plot>
);

const BollPlot: FC = () => (
	<Plot width={734} height={279} viewBox="14 1972 734 279">
		<line x1={14} x2={747} y1={2111} y2={2111} stroke="#e4e4e4" strokeWidth={2} strokeDasharray="5 4" />
		{candles.map(({x, hi, lo, up}, i) => {
			const [cx, top] = low(x, hi);
			const h = (lo - hi) / 2.613;
			const tick = top + h * (i % 3 ? 0.3 : 0.7);
			return (
				<path
					key={x}
					d={`M${cx} ${top}v${h}M${cx - 1.5} ${tick}h1.5M${cx} ${top + h * 0.55}h1.5`}
					stroke={up ? "#dc3a38" : "#35651c"}
					strokeWidth={2.4}
				/>
			);
		})}
		{bands.map(({color, data}) => (
			<Trend key={color} color={color} points={parse(data, low)} />
		))}
	</Plot>
);

const ChipDistribution: FC = () => (
	<svg width={440} height={799} viewBox="764 796 440 799">
		<polygon points={join(parse(lossChips, chip))} fill="#4791ec" />
		<polygon points={join(parse(profitChips, chip))} fill="#e83030" />
		<line x1={765} x2={1202} y1={1014} y2={1014} stroke="#dba63c" strokeWidth={2.5} strokeDasharray="10 7" />
		<g fontSize={31} fill="#999" textAnchor="end">
			{[["15.63", 829], ["13.82", 1007], ["12.02", 1203], ["10.21", 1399], ["8.4", 1578]].map(([t, y]) => (
				<text key={t} x={1198} y={y} textLength={t === "8.4" ? 40 : 73} lengthAdjust="spacingAndGlyphs">
					{t}
				</text>
			))}
		</g>
	</svg>
);

const Help: FC<{r: number; color: string}> = ({r, color}) => (
	<svg width={r * 2 + 2} height={r * 2 + 2} viewBox="-20 -20 40 40" fill="none" stroke={color} strokeWidth={2.6}>
		<circle r={18.5} />
		<path d="M-6 -5a6 6 0 1 1 9 5q-3 2 -3 5" />
		<circle cy={10} r={1} />
	</svg>
);

const Signal: FC = () => (
	<svg width={50} height={40} viewBox="0 0 50 40" stroke="#fff" strokeWidth={6} strokeLinecap="round">
		<path d="M4 30V36M14.5 26V36M25 21V36M35.5 13V36M46 4V36" />
	</svg>
);

const StatusIcons: FC = () => (
	<>
		<svg width={108} height={44} viewBox="0 0 108 44" fill="none" stroke="#fff" strokeWidth={3.6}>
			<path d="M28 38A18.500 18.500 0 1 1 39 22M13 14L17 11V31M24 11V30L29 26" />
			<path d="M27 41C27 29 35 28 41 25C41 36 36 41 27 39Z" fill="#fff" stroke="none" />
			<path d="M58 22C67 2 97 2 106 22C97 42 67 42 58 22Z" />
			<path d="M82 7A14 14 0 1 0 92 32C96 25 94 13 84 10Q90 20 84 25Q76 23 82 7Z" fill="#fff" stroke="none" />
		</svg>
		<svg
			style={{marginLeft: 150}}
			width={106}
			height={44}
			viewBox="0 0 106 44"
			fill="none"
			stroke="#fff"
			strokeWidth={4}
			strokeLinecap="round"
		>
			<circle cx={21} cy={24} r={18} fill="#fff" stroke="none" />
			<path d="M3 10L8 5M39 10L34 5M6 41L12 35M37 41L31 35" />
			<path d="M21 14V24L29 32" stroke="#f12f38" />
			<rect x={71} y={4} width={20} height={36} rx={5} />
			<path d="M61 11L64 15L61 19L64 23L61 27L64 31L61 35M101 11L104 15L101 19L104 23L101 27L104 31L101 35" strokeWidth={3} />
		</svg>
		<svg width={62} height={46} viewBox="0 0 62 46" fill="none" stroke="#fff" strokeWidth={4.5} style={{margin: "0 19px 0 10px"}}>
			<text x={1} y={20} fontSize={23} fill="#fff" stroke="none" textLength={11}>
				6
			</text>
			<path d="M15 11Q35 -4 56 15M15 22Q35 3 52 23M21 31Q33 17 46 32" strokeLinecap="round" />
			<circle cx={32} cy={39} r={5.500} fill="#fff" stroke="none" />
			<path d="M43 35V44L38 40zM50 35V44M54 35h4l-4 8z" fill="#fff" strokeWidth={1.5} />
		</svg>
		<Signal />
		<svg width={23} height={10} />
		<Signal />
		<Battery>
			<Squeeze $k={0.96} $from="center">28</Squeeze>
		</Battery>
		<svg width={42} height={44} viewBox="0 0 42 44" fill="#fff">
			<rect x={3} y={15} width={5} height={13} rx={2.500} />
			<path d="M30 5C37 15 37 28 26 37L23 38C23 29 27 21 29 17C23 22 20 28 20 36C10 27 19 15 30 5Z" />
		</svg>
	</>
);

const Robot: FC = () => (
	<svg width={80} height={74} viewBox="0 0 80 74">
		<defs>
			<linearGradient id="shell" x2="1" y2="1">
				<stop offset="0" stopColor="#fff" />
				<stop offset="1" stopColor="#bdb6ee" />
			</linearGradient>
			<linearGradient id="rim" x2="1">
				<stop offset="0" stopColor="#6cc3e8" />
				<stop offset="1" stopColor="#7b4be0" />
			</linearGradient>
		</defs>
		<path d="M28 5Q41 1 41 14" stroke="#eae6fb" strokeWidth={3.500} fill="none" />
		<circle cx={29} cy={5} r={4.5} fill="#ebe6fa" />
		<rect x={1} y={32} width={78} height={21} rx={9} fill="#d9d5f5" />
		<path d="M40 11C64 11 74 24 74 43C74 62 59 72 40 72C21 72 6 62 6 43C6 24 16 11 40 11Z" fill="url(#shell)" />
		<path d="M40 21C60 21 69 24 69 42C69 57 58 61 40 61C22 61 11 57 11 42C11 24 20 21 40 21Z" fill="#1d2947" stroke="url(#rim)" strokeWidth={2} />
		<rect x={26} y={34} width={7} height={16} rx={3.500} fill="#fff" />
		<rect x={47} y={34} width={7} height={16} rx={3.500} fill="#fff" />
	</svg>
);

const controlPaths = [
	"M37 22L19 39L37 56M54 22L36 39L54 56",
	"M39 21V57M21 39H57",
	"M21 39H57",
	"M45 21L27 39L45 57",
	"M33 21L51 39L33 57",
	"M21 37V21H38M41 57H58V40",
];

const dockItems: {label: string; icon: ReactNode}[] = [
	{
		label: "下单",
		icon: <path d="M10 3H48Q54 3 54 9V45L43 59H10Q4 59 4 53V9Q4 3 10 3ZM11 18H47M11 26H47M11 34H47M11 42H35" />,
	},
	{
		label: "诊股",
		icon: <path d="M19 6H41M6 12H52Q59 12 59 19V49Q59 56 52 56H7Q0 56 0 49V19Q0 12 7 12M8 60H17M42 60H51M29 24V44M18 34H40" />,
	},
	{label: "删自选", icon: <path d="M4 5H54V56H4ZM15 30H43" />},
	{
		label: "功能",
		icon: (
			<>
				<circle cx={29} cy={30} r={26} />
				<path d="M17 23H41M17 38H41" />
			</>
		),
	},
];

const legendRows: [string, string][][] = [
	[["M5:13.52", "#111"], ["M10:13.58", "#e2a01f"], ["M20:13.55", "#e8657a"]],
	[["M30:13.72", "#70bf4c"], ["M60:13.16", "#3476a6"], ["M120:12.08", "#4c1552"]],
	[["M250:11.40", "#ac5040"]],
];

const Amount: FC<{value: string; unit?: boolean; k?: number}> = ({value, unit, k = 0.87}) => (
	<span>
		<Squeeze $from="right" $k={k}>{value}</Squeeze>
		{unit && <b>亿</b>}
	</span>
);

const App: FC = () => (
	<>
		<GlobalStyle />
		<Page>
			<Header>
				<StatusBar>
					<Clock>
						<Squeeze $k={0.96}>22:33</Squeeze>
					</Clock>
					<AppIcon $bg="#2e87f5">
						<Squeeze $k={0.9} $from="center" style={{fontSize: 30, fontWeight: 400}}>时</Squeeze>
					</AppIcon>
					<AppIcon $bg="linear-gradient(#ff5a1f, #e30808 55%)">C</AppIcon>
					<AppIcon $bg="#ff3c42" style={{marginRight: 82}}>
						<svg width={28} height={26} viewBox="0 0 28 26">
							<path d="M1 3L8 1L14 4L20 1L27 3V22L14 25L1 22Z" fill="#fff2ee" />
						</svg>
					</AppIcon>
					<StatusIcons />
				</StatusBar>
				<TitleBar>
					<TitleSlot $w={371} $top={36} $left={81}>
						<svg width={44} height={72} viewBox="0 0 44 72" fill="none" stroke="#fff" strokeWidth={5}>
							<path d="M40 3L5 35L40 68" />
						</svg>
					</TitleSlot>
					<TitleSlot $w={25} $top={54}>
						<svg width={26} height={40} fill="#fff"><path d="M26 0V39L0 20Z" /></svg>
					</TitleSlot>
					<StockTitle>
						光洋股份
						<StockCode>
							<CodeBox><Squeeze>002708</Squeeze></CodeBox>
							<Badge $w={50}>L1</Badge>
							<Badge $w={104}>深股通</Badge>
						</StockCode>
					</StockTitle>
					<TitleSlot $w={121} $top={54}>
						<svg width={26} height={40} fill="#fff"><path d="M0 0V39L25 20Z" /></svg>
					</TitleSlot>
					<TitleSlot $w={151} $top={34}>
						<Robot />
					</TitleSlot>
					<TitleSlot $w={80} $top={40}>
						<svg width={68} height={68} viewBox="0 0 68 68" fill="none" stroke="#fff" strokeWidth={4.5}>
							<circle cx={32.5} cy={33} r={29} />
							<path d="M52 53L65 65" />
						</svg>
					</TitleSlot>
				</TitleBar>
			</Header>

			<Quote>
				<PriceBox>
					<Price><Squeeze $k={0.86}>13.52</Squeeze></Price>
					<Change>
						<Squeeze $k={0.88}>−0.13</Squeeze>
						<Squeeze $k={0.9}>−0.95%</Squeeze>
					</Change>
				</PriceBox>
				<Stats $inset={40}>
					<Stat $color="#dc3a38"><em>高</em><Amount value="14.00" /></Stat>
					<Stat $color="#129312"><em>低</em><Amount value="13.40" /></Stat>
					<Stat $color="#129312"><em>开</em><Amount value="13.60" /></Stat>
				</Stats>
				<Stats $inset={40}>
					<Stat><em>市值</em><Amount value="76.00" unit k={0.89} /></Stat>
					<Stat><em>流通</em><Amount value="69.49" unit k={0.89} /></Stat>
					<Stat style={{fontSize: 45}}><em style={{fontSize: 43}}>市盈<small>TTM</small></em><Amount value="102.12" /></Stat>
				</Stats>
				<Stats $inset={1}>
					<Stat $color="#129312"><em>量比</em><Amount value="0.90" /></Stat>
					<Stat><em>换</em><Amount value="5.48%" k={0.9} /></Stat>
					<Stat><em>额</em><Amount value="3.84" unit k={0.9} /></Stat>
				</Stats>
				<Corner />
			</Quote>
			<Strip />

			<PeriodTabs>
				<Tab>分时</Tab>
				<Tab $on>日K<Marker $x={16} $w={39} $h={10} /></Tab>
				<Tab>周K</Tab>
				<Tab>月K</Tab>
				<Tab>五日</Tab>
				<Tab>更多<Caret $s={12} $h={20} $color="#aaa" /></Tab>
				<Tab>
					<svg width={52} height={50} viewBox="0 0 52 50" fill="none" stroke="#999" strokeWidth={5} strokeLinejoin="round">
						<path d="M14 3H38L49 25L38 47H14L3 25Z" />
						<circle cx={26} cy={25} r={7.5} />
					</svg>
				</Tab>
			</PeriodTabs>

			<Legend>
				<LegendPicker>
					<Picker $w={124} $h={56} style={{fontSize: 35}}>均线<Caret $s={10} $h={14} $color="#666" /></Picker>
				</LegendPicker>
				<Lines>
					{legendRows.map((row, i) => (
						<Line key={i}>
							{i === 0 && <Ink $c="#333" $gap={14} style={{fontSize: 34, fontWeight: 400}}>日线</Ink>}
							{row.map(([text, color]) => (
								<Ink key={text} $c={color}><Squeeze $k={0.915}>{text}</Squeeze></Ink>
							))}
						</Line>
					))}
				</Lines>
				<Adjust>前复权</Adjust>
				<ChipsButton>筹码</ChipsButton>
			</Legend>

			<Board>
				<div>
					<KChart>
						<CandlePlot />
						<Controls>
							{controlPaths.map((d) => (
								<RoundButton key={d}>
									<svg width={78} height={78} fill="none" stroke="#555" strokeWidth={4.500}>
										<path d={d} />
									</svg>
								</RoundButton>
							))}
						</Controls>
					</KChart>
					<TimeAxis>
						<span>2024-10-29<u>0</u></span>
						<Tick $x={50}>04-25</Tick>
						<Tick $x={50}>08-08</Tick>
						<Tick $x={98}>11-12</Tick>
					</TimeAxis>
					<SubChart $gap={13}>
						<VolumePlot />
						<SubHead>
							<Picker $w={176}>成交额<Caret $s={10} $h={14} $color="#666" /></Picker>
							<Ink $c="#35651c" style={{marginLeft: 14}}><Figure $k={0.96}>额:3.84亿</Figure></Ink>
							<Ink $c="#111" style={{marginLeft: 15}}><Figure $k={0.95}>M5:4.67亿</Figure></Ink>
						</SubHead>
						<SubLine>
							<Ink $c="#e0a020"><Figure $k={0.94}>M10:3.83亿</Figure></Ink>
							<Ink $c="#333" style={{marginLeft: -8}}>换手率:<Ink $c="#45a8e2"><Figure $k={0.93}>5.48%</Figure></Ink></Ink>
						</SubLine>
					</SubChart>
					<SubChart>
						<BollPlot />
						<SubHead>
							<Picker $w={259}><Squeeze $k={1.07} $from="center">BOLL(21,2)</Squeeze><Caret $s={10} $h={14} $color="#666" style={{marginLeft: 6}} /></Picker>
							<span style={{marginLeft: 8}}><Help r={19} color="#bbb" /></span>
							<Link>查看指标战法</Link>
						</SubHead>
						<SubLine>
							<Ink $c="#4a8fe0"><Figure $k={0.97}>MID:+13.55</Figure></Ink>
							<Ink $c="#dc3a38"><Figure $k={0.99}>UPPER:+14.09</Figure></Ink>
						</SubLine>
						<SubLine><Ink $c="#0a8f0a"><Figure $k={1.01}>LOWER:+13.01</Figure></Ink></SubLine>
					</SubChart>
				</div>

				<ChipPanel>
					<ChipPlot><ChipDistribution /></ChipPlot>
					<ChipBody>
						<Pair>
							<Pill $on>全部筹码</Pill>
							<Pill>
								主力筹码
								<Lock>
									<svg width={26} height={26} viewBox="0 0 26 26" fill="none" stroke="#ffe7b8" strokeWidth={2}>
										<rect x={1.500} y={8} width={23} height={15} rx={1.500} />
										<path d="M8 8V3H18V8M13 13V18" />
									</svg>
								</Lock>
							</Pill>
						</Pair>
						<Row $c="#e0323f" $top={18}>收盘获利<b><Squeeze $k={0.93} $from="right">27.73%</Squeeze></b></Row>
						<Row $c="#ee9a1c">平均成本<b><Squeeze $k={0.9} $from="right">13.74</Squeeze></b></Row>
						<Toggle><span>90%筹码</span><span>70%筹码</span></Toggle>
						<Row $c="#999" $v="#222" $top={18}>价格区间<b><Squeeze $k={0.87} $from="right">12.46 – 14.58</Squeeze></b></Row>
						<Row $c="#999" $v="#222">集中度<b><Squeeze $k={0.92} $from="right">7.84%</Squeeze></b></Row>
						<Row $c="#999" style={{justifyContent: "flex-start", gap: 12, height: 67}}>筹码分布说明<Help r={14} color="#999" /></Row>
						<Pair>
							<Action $w={215} $bg="#e8edff" $c="#3a63e8">
								<svg width={35} height={34} viewBox="0 0 35 34" stroke="#3a63e8" strokeWidth={4}>
									<path d="M0 2H18M0 9.500H27M0 17H35M0 24.500H27M0 32H18" />
								</svg>
								筹码选股
							</Action>
							<Action $w={104} $bg="#f4f4f4" $c="#5c5c5c">关闭</Action>
						</Pair>
					</ChipBody>
				</ChipPanel>
			</Board>
			<Strip />

			<SectionTabs>
				<span>看点</span>
				<span>资讯</span>
				<span>盘口</span>
				<span>资金</span>
				<b>社区</b>
				<span>简况(F10)</span>
				<span>财</span>
				<Marker $x={746} $w={64} $h={13} $color="#fb3a32" />
			</SectionTabs>
			<FeedTabs>
				<b>最新</b>
				<span>热门</span>
				<svg width={60} height={60} viewBox="0 0 60 60" fill="none" stroke="#333" strokeWidth={2.600}>
					<rect x={2} y={7} width={55} height={45} rx={3} />
					<path d="M2 18L26 32Q29 34 32 32L57 18" />
				</svg>
				<svg width={52} height={60} viewBox="0 0 52 60" fill="none" stroke="#333" strokeWidth={2.600}>
					<ellipse cx={25.500} cy={16} rx={14} ry={14} />
					<path d="M19 29C8 32 2 40 2 50Q2 56 8 56H43Q49 56 49 50C49 40 43 32 32 29" />
				</svg>
				<svg width={60} height={60} viewBox="0 0 60 60" fill="none" stroke="#333" strokeWidth={2.600}>
					<path d="M50 41A26.500 26.500 0 1 1 53 28" />
					<path d="M48 25H58L54 33Z" fill="#333" strokeWidth={1} />
				</svg>
				<Marker $x={84} $w={53} $h={13} />
			</FeedTabs>

			<Dock>
				<Sector>
					<Caret $s={14} $h={16} $color="#aaa" $up />
					<SectorName>汽车零部件</SectorName>
					<SectorChange><Squeeze $k={0.96} $from="center">-0.91%</Squeeze></SectorChange>
				</Sector>
				{dockItems.map(({label, icon}) => (
					<DockItem key={label}>
						<svg width={60} height={62} viewBox="-1 0 60 62" overflow="visible" fill="none" stroke="#dcdcdc" strokeWidth={3}>
							{icon}
						</svg>
						{label}
					</DockItem>
				))}
			</Dock>
		</Page>
	</>
);

export default App;
